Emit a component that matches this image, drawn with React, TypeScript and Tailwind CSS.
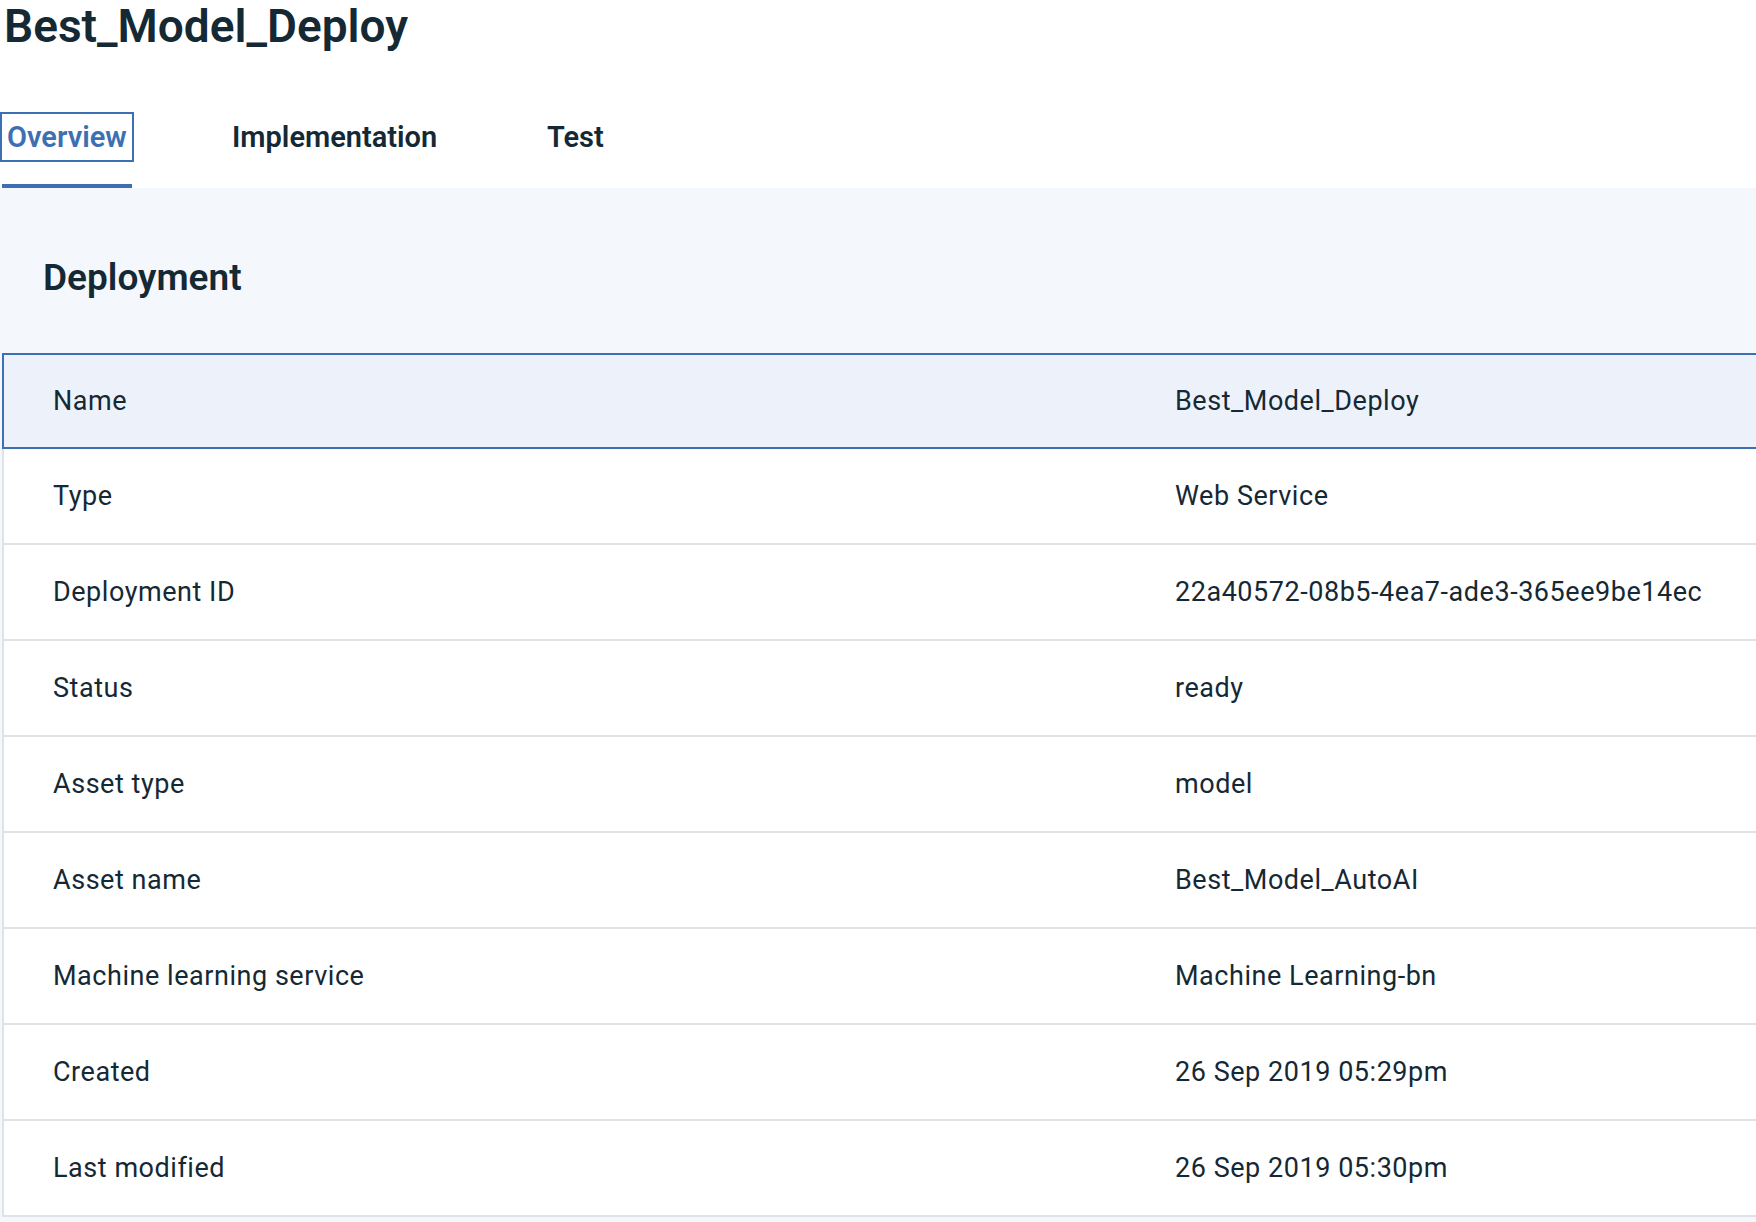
import React from 'react'

interface DetailRow {
  label: string
  value: string
}

const rows: DetailRow[] = [
  { label: 'Name', value: 'Best_Model_Deploy' },
  { label: 'Type', value: 'Web Service' },
  { label: 'Deployment ID', value: '22a40572-08b5-4ea7-ade3-365ee9be14ec' },
  { label: 'Status', value: 'ready' },
  { label: 'Asset type', value: 'model' },
  { label: 'Asset name', value: 'Best_Model_AutoAI' },
  { label: 'Machine learning service', value: 'Machine Learning-bn' },
  { label: 'Created', value: '26 Sep 2019 05:29pm' },
  { label: 'Last modified', value: '26 Sep 2019 05:30pm' },
]

const tabs = [
  { label: 'Overview', width: 'w-[225px]' },
  { label: 'Implementation', width: 'w-[315px]' },
  { label: 'Test', width: 'w-[120px]' },
]

const Tabs: React.FC = () => {
  return (
    <div className="flex mt-[63px] h-[76px]">
      {tabs.map((tab, i) => (
        <div key={tab.label} className={`${tab.width} flex flex-col`}>
          {i === 0 ? (
            <>
              <div className="w-[134px] h-[50px] border-2 border-[#3d70b2] flex items-center pl-[5px] text-[29px] font-semibold text-[#3d70b2] leading-none">
                {tab.label}
              </div>
              <div className="flex-1" />
              <div className="ml-[2px] w-[130px] h-[4px] bg-[#3d70b2]" />
            </>
          ) : (
            <div className="h-[50px] flex items-center pl-[7px] text-[29px] font-semibold text-[#152935] leading-none">
              {tab.label}
            </div>
          )}
        </div>
      ))}
    </div>
  )
}

const DetailsTable: React.FC = () => {
  return (
    <div className="ml-[2px]">
      {rows.map((row, i) => (
        <div
          key={row.label}
          className={
            i === 0
              ? 'grid grid-cols-[1171px_1fr] items-center h-[96px] bg-[#edf2fa] border-y-2 border-l-2 border-[#3d70b2]'
              : 'grid grid-cols-[1171px_1fr] items-center h-[96px] bg-white border-b-2 border-l-2 border-[#dfe3e6]'
          }
        >
          <div className="pl-[49px]">{row.label}</div>
          <div>{row.value}</div>
        </div>
      ))}
    </div>
  )
}

export default function App() {
  return (
    <div
      className="h-screen w-full overflow-hidden flex flex-col bg-white text-[#152935]"
      style={{ fontFamily: 'Roboto, "Noto Sans", sans-serif' }}
    >
      <h1 className="pt-[3px] pl-[4px] text-[46px] font-semibold leading-none">
        Best_Model_Deploy
      </h1>

      <Tabs />

      <div className="flex-1 bg-[#f4f7fb]">
        <h2 className="pt-[71px] pl-[43px] text-[37px] font-semibold leading-none">
          Deployment
        </h2>
        <div className="mt-[57px] text-[27px] tracking-[0.02em] leading-none">
          <DetailsTable />
        </div>
      </div>
    </div>
  )
}
